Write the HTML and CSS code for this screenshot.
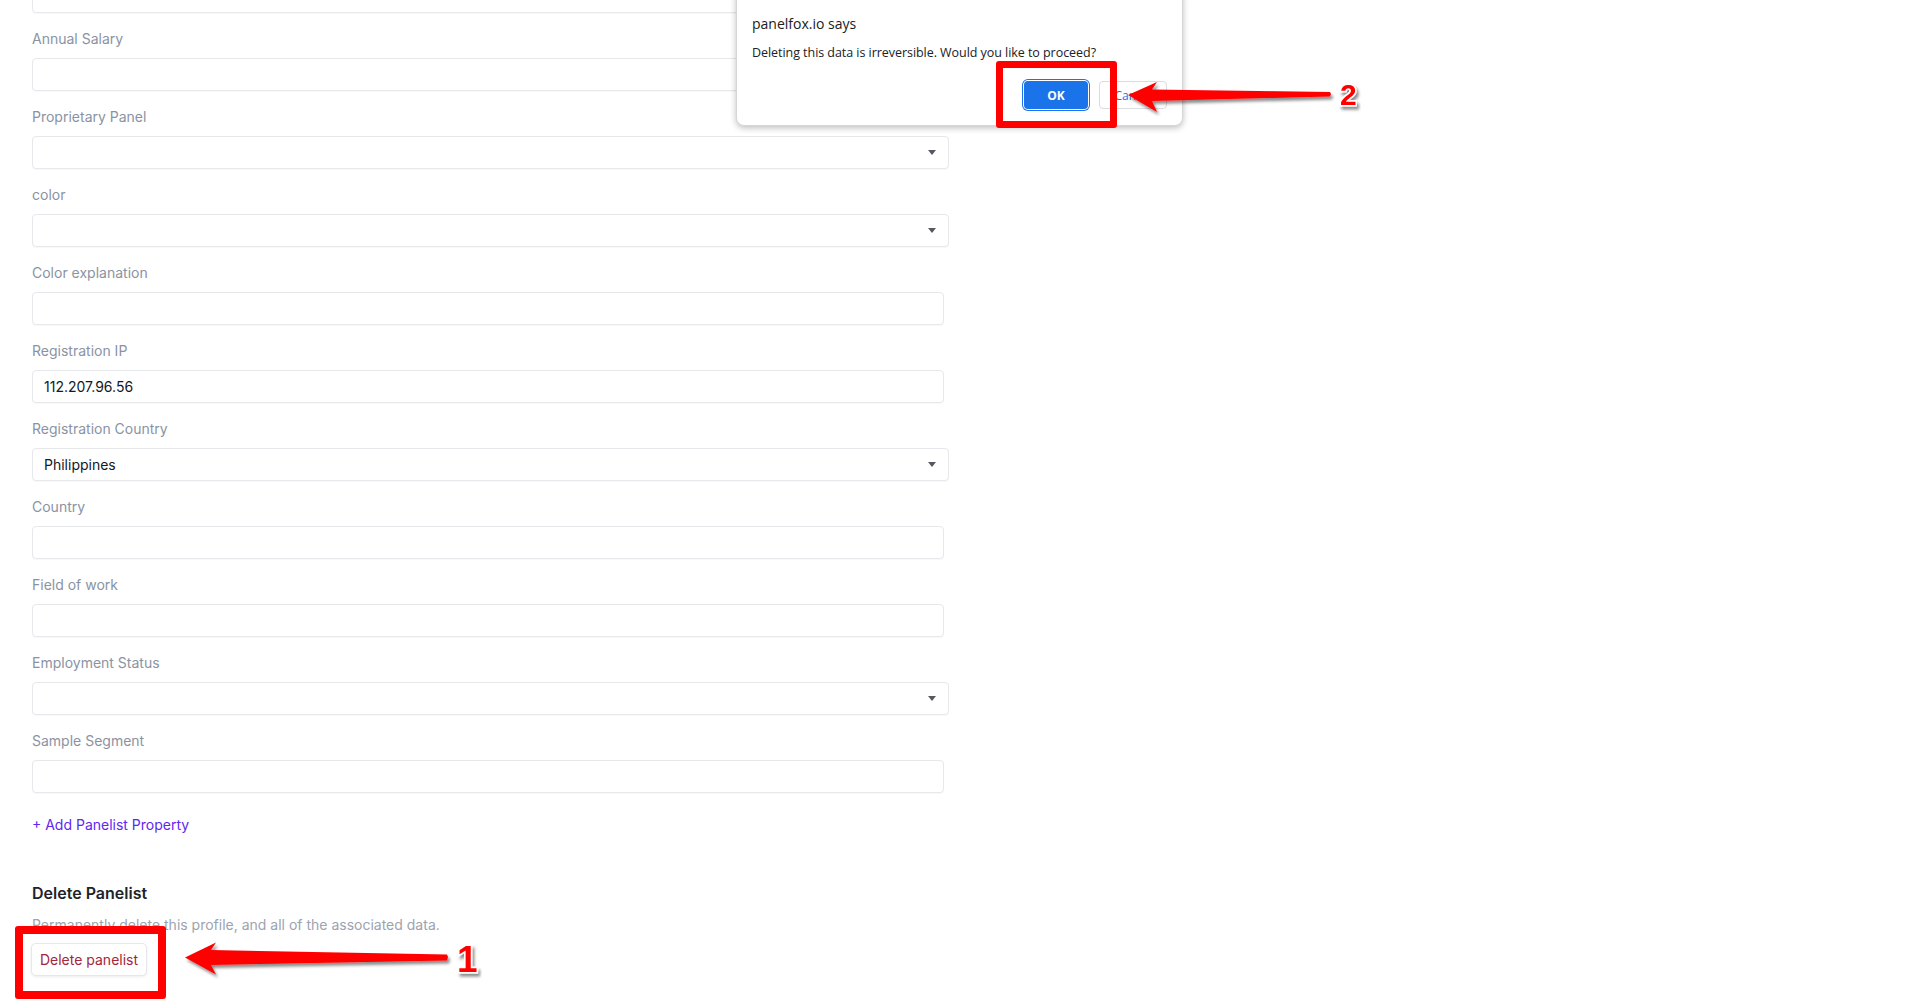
FILE: index.html
```html
<!DOCTYPE html>
<html lang="en">
<head>
<meta charset="utf-8">
<title>Panelist</title>
<link rel="stylesheet" href="styles.css">
</head>
<body>
<div class="page">
  <form class="form">
    <div class="field">
      <input class="text-input" type="text" value="">
    </div>
    <div class="field">
      <label class="label">Annual Salary</label>
      <input class="text-input" type="text" value="">
    </div>
    <div class="field">
      <label class="label">Proprietary Panel</label>
      <div class="select-wrap"><select class="select"><option></option></select></div>
    </div>
    <div class="field">
      <label class="label">color</label>
      <div class="select-wrap"><select class="select"><option></option></select></div>
    </div>
    <div class="field">
      <label class="label">Color explanation</label>
      <input class="text-input" type="text" value="">
    </div>
    <div class="field">
      <label class="label">Registration IP</label>
      <input class="text-input" type="text" value="112.207.96.56">
    </div>
    <div class="field">
      <label class="label">Registration Country</label>
      <div class="select-wrap"><select class="select"><option>Philippines</option></select></div>
    </div>
    <div class="field">
      <label class="label">Country</label>
      <input class="text-input" type="text" value="">
    </div>
    <div class="field">
      <label class="label">Field of work</label>
      <input class="text-input" type="text" value="">
    </div>
    <div class="field">
      <label class="label">Employment Status</label>
      <div class="select-wrap"><select class="select"><option></option></select></div>
    </div>
    <div class="field">
      <label class="label">Sample Segment</label>
      <input class="text-input" type="text" value="">
    </div>
    <a class="add-link" href="#">+ Add Panelist Property</a>
  </form>

  <section class="danger">
    <h3 class="danger-title">Delete Panelist</h3>
    <p class="danger-text">Permanently delete this profile, and all of the associated data.</p>
    <button class="danger-btn" type="button">Delete panelist</button>
  </section>

  <div class="dialog" role="dialog">
    <div class="dialog-title">panelfox.io says</div>
    <div class="dialog-msg">Deleting this data is irreversible. Would you like to proceed?</div>
    <div class="dialog-actions">
      <button class="btn-ok" type="button">OK</button>
      <button class="btn-cancel" type="button">Cancel</button>
    </div>
  </div>

  <div class="mark mark-1"></div>
  <div class="mark mark-2"></div>

  <svg class="anno anno-1" width="320" height="60" viewBox="170 930 320 60">
    <defs>
      <filter id="sh1" x="-10%" y="-40%" width="130%" height="200%">
        <feDropShadow dx="2" dy="3" stdDeviation="1.6" flood-color="#000" flood-opacity="0.45"/>
      </filter>
    </defs>
    <polygon filter="url(#sh1)" fill="#ff0000" points="185,957.5 216,942.5 211,950 447,954.5 448,957 447,960.5 211,965 216,974.5"/>
    <text x="457" y="972" class="num num-1" filter="url(#sh1)">1</text>
  </svg>

  <svg class="anno anno-2" width="260" height="50" viewBox="1120 72 260 50">
    <defs>
      <filter id="sh2" x="-10%" y="-40%" width="130%" height="200%">
        <feDropShadow dx="2" dy="3" stdDeviation="1.6" flood-color="#000" flood-opacity="0.45"/>
      </filter>
    </defs>
    <polygon filter="url(#sh2)" fill="#ff0000" points="1128,95 1157,82 1152,89.5 1330,92 1331,94 1330,96.5 1152,101 1157,112"/>
    <text x="1340" y="105" class="num num-2" filter="url(#sh2)">2</text>
  </svg>
</div>
</body>
</html>
```

FILE: styles.css
```css
* {
  box-sizing: border-box;
}

html, body {
  margin: 0;
  padding: 0;
  background: #ffffff;
}

body {
  font-family: Inter, "Liberation Sans", Arial, sans-serif;
  color: #111827;
  overflow: hidden;
  height: 1005px;
}

.page {
  position: relative;
  display: flow-root;
  width: 1919px;
  height: 1005px;
  padding-left: 32px;
}

.form {
  display: flex;
  flex-direction: column;
  width: 917px;
  margin-top: -20px;
}

.field {
  display: flex;
  flex-direction: column;
  margin-bottom: 16px;
}

.label {
  font-size: 14px;
  line-height: 20px;
  color: #8a93a3;
  margin-bottom: 9px;
}

.text-input {
  width: 912px;
  height: 33px;
  padding: 0 11px;
  border: 1px solid #e6e8ec;
  border-radius: 4px;
  box-shadow: 0 1px 1px rgba(0, 0, 0, 0.03);
  background: #fff;
  font-family: Inter, "Liberation Sans", Arial, sans-serif;
  font-size: 14px;
  color: #111827;
  outline: none;
}

.select-wrap {
  position: relative;
  width: 917px;
}

.select-wrap::after {
  content: "";
  position: absolute;
  right: 13px;
  top: 14px;
  border-left: 4px solid transparent;
  border-right: 4px solid transparent;
  border-top: 5px solid #555a60;
  pointer-events: none;
}

.select {
  appearance: none;
  -webkit-appearance: none;
  width: 917px;
  height: 33px;
  padding: 0 11px;
  border: 1px solid #e6e8ec;
  border-radius: 4px;
  box-shadow: 0 1px 1px rgba(0, 0, 0, 0.03);
  background: #fff;
  font-family: Inter, "Liberation Sans", Arial, sans-serif;
  font-size: 14px;
  color: #111827;
  outline: none;
}

.add-link {
  margin-top: 6px;
  font-size: 14px;
  line-height: 20px;
  color: #6026f2;
  text-decoration: none;
  align-self: flex-start;
}

.danger {
  margin-top: 46px;
  display: flex;
  flex-direction: column;
  align-items: flex-start;
}

.danger-title {
  margin: 0;
  font-size: 16px;
  line-height: 24px;
  font-weight: 600;
  color: #1f2328;
}

.danger-text {
  margin: 10px 0 0;
  font-size: 14px;
  line-height: 20px;
  color: #9ca3af;
}

.danger-btn {
  margin-top: 8px;
  margin-left: -1px;
  height: 33px;
  width: 116px;
  padding: 0;
  border: 1px solid #e5e7eb;
  border-radius: 5px;
  background: #fff;
  box-shadow: 0 1px 3px rgba(0, 0, 0, 0.08);
  font-family: Inter, "Liberation Sans", Arial, sans-serif;
  font-size: 14px;
  color: #a3263a;
}

/* Browser confirm dialog overlay */
.dialog {
  position: absolute;
  left: 736px;
  top: -12px;
  width: 447px;
  height: 138px;
  padding: 27px 15px 0 15px;
  background: #fff;
  border-radius: 8px;
  border: 1px solid #d6d6d6;
  box-shadow: 0 2px 6px rgba(0, 0, 0, 0.25);
  font-family: "Open Sans", "Noto Sans", sans-serif;
  color: #202124;
  display: flex;
  flex-direction: column;
}

.dialog-title {
  font-size: 14px;
  line-height: 16px;
}

.dialog-msg {
  margin-top: 13px;
  font-size: 12.5px;
  line-height: 16px;
  letter-spacing: -0.05px;
}

.dialog-actions {
  margin-top: 20px;
  display: flex;
  justify-content: flex-end;
  gap: 11px;
}

.btn-ok {
  width: 64px;
  height: 28px;
  border: none;
  border-radius: 4px;
  background: #1a73e8;
  color: #fff;
  font-family: "Open Sans", "Noto Sans", sans-serif;
  font-weight: 700;
  font-size: 12px;
  box-shadow: 0 0 0 1px #ffffff, 0 0 0 2px #1a73e8;
}

.btn-cancel {
  width: 68px;
  height: 28px;
  border: 1px solid #dadce0;
  border-radius: 4px;
  background: #fff;
  color: #1a73e8;
  font-family: "Open Sans", "Noto Sans", sans-serif;
  font-size: 12px;
}

/* Annotation overlays */
.mark {
  position: absolute;
  border: 8px solid #ff0000;
  border-radius: 3px;
}

.mark-1 {
  left: 15px;
  top: 926px;
  width: 151px;
  height: 73px;
}

.mark-2 {
  left: 996px;
  top: 61px;
  width: 121px;
  height: 67px;
  border-width: 7px;
}

.anno {
  position: absolute;
  overflow: visible;
}

.anno-1 {
  left: 170px;
  top: 930px;
}

.anno-2 {
  left: 1120px;
  top: 72px;
}

.num {
  font-family: "Liberation Sans", Arial, sans-serif;
  font-weight: 700;
  fill: #ff0000;
  stroke: #ffffff;
  stroke-width: 3px;
  paint-order: stroke fill;
}

.num-1 {
  font-size: 37px;
}

.num-2 {
  font-size: 30px;
}
```
